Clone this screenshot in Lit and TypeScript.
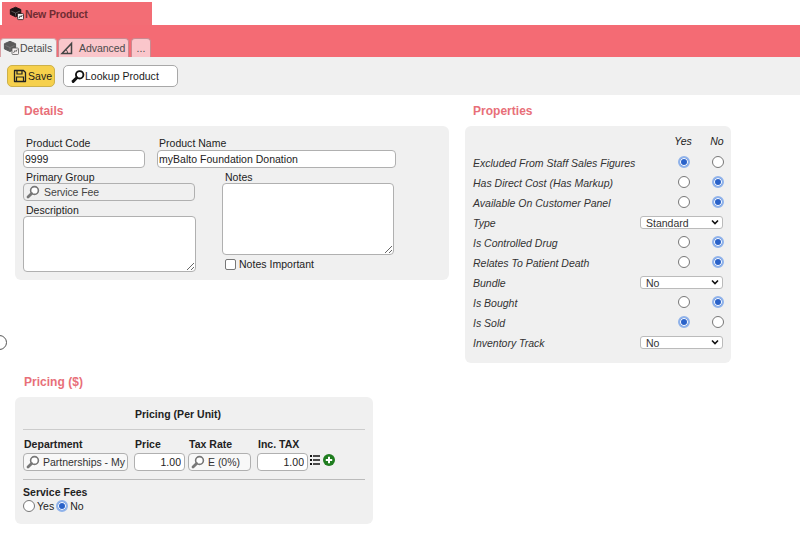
import { LitElement, html, css, svg } from "lit";
import { customElement } from "lit/decorators.js";

const lens = html`<svg class="lens" viewBox="0 0 14 14"><circle cx="8.5" cy="5.5" r="3.9" fill="#fff" stroke="#777" stroke-width="1.6"/><path d="M5.6 8.4 2 12" stroke="#777" stroke-width="2.8" stroke-linecap="round"/></svg>`;

const boxes = (c: string) => svg`<path d="M7 .8 12.6 3.2V8.4L7 11 1.4 8.4V3.2Z" fill="${c}" stroke="${c}" stroke-linejoin="round"/><path d="M2.5 5 7 7 11.5 5" stroke="#888" stroke-width=".6" fill="none"/><path d="M7 7v3" stroke="#888" stroke-width=".6"/><rect x="9" y="7.5" width="6.5" height="6.5" rx="1" fill="#f4f0f0" stroke="${c}" stroke-width=".8"/><path d="M10.5 12.5 12 10l1 1 1.2-2" stroke="${c}" stroke-width=".9" fill="none"/>`;

type Row = { label: string; yes?: boolean; select?: string };
const rows: Row[] = [
  { label: "Excluded From Staff Sales Figures", yes: true },
  { label: "Has Direct Cost (Has Markup)", yes: false },
  { label: "Available On Customer Panel", yes: false },
  { label: "Type", select: "Standard" },
  { label: "Is Controlled Drug", yes: false },
  { label: "Relates To Patient Death", yes: false },
  { label: "Bundle", select: "No" },
  { label: "Is Bought", yes: false },
  { label: "Is Sold", yes: true },
  { label: "Inventory Track", select: "No" },
];

@customElement("app-root")
export class AppRoot extends LitElement {
  static styles = css`
    :host { display: block; position: relative; width: 800px; height: 544px; overflow: hidden; background: #fff;
      font-family: "Liberation Sans", Arial, sans-serif; font-size: 10.5px; color: #222; letter-spacing: 0.02px; }
    * { box-sizing: border-box; }
    .title-row { height: 25px; padding: 2px 0 0 2px; display: flex; }
    .title { width: 150px; height: 23px; background: #f36d75; display: flex; align-items: center; gap: 1px; padding: 0 0 0 7px;
      font-weight: bold; font-size: 10.5px; letter-spacing: -0.15px; color: #6f2c32; }
    .title svg { width: 15px; height: 15px; }
    .tabbar { height: 32px; background: #f46b74; display: flex; align-items: flex-end; gap: 1px; }
    .tab { height: 19px; background: #fac6cb; border: 1px solid #c98a90; border-bottom: none; border-radius: 4px 4px 0 0;
      display: flex; align-items: center; gap: 3px; color: #4b4b4b; font-size: 10.5px; }
    .tab svg { width: 16px; height: 16px; }
    .tab.a { width: 57px; background: #f0f0f0; border-color: #d9a0a5; padding-left: 2px; gap: 1px; }
    .tab.b { width: 71px; padding-left: 1px; gap: 3px; letter-spacing: -0.05px; }
    .tab.c { width: 20px; margin-left: 1px; justify-content: center; }
    .toolbar { height: 38px; background: #f0f0f0; display: flex; align-items: flex-start; gap: 8px; padding: 8px 0 0 7px; }
    .btn { height: 22px; border-radius: 5px; display: flex; align-items: center; font-size: 10.5px; color: #1a1a1a; }
    .save { width: 48px; background: #f6d04c; border: 1px solid #cdb14a; padding-left: 5px; gap: 1px; }
    .save svg { width: 14px; height: 14px; }
    .lookup { width: 115px; background: #fff; border: 1px solid #a8a8a8; padding-left: 7px; }
    .lookup svg { width: 14px; height: 15px; }
    .top { display: flex; padding-left: 15px; gap: 16px; }
    .col-l { width: 434px; }
    .col-r { width: 266px; }
    h2 { margin: 0; height: 31px; padding: 9px 0 0 9px; font-size: 12px; line-height: 14px; font-weight: bold; color: #e86f79; }
    .col-r h2 { padding-left: 8px; }
    .panel { background: #f0f0f0; border-radius: 6px; }
    .details { height: 154px; padding: 11px 0 0 8px; }
    label, .lbl { display: block; height: 13px; line-height: 13px; padding-left: 3px; white-space: nowrap; }
    input[type=text], textarea, .field { display: block; background: #fff; border: 1px solid #b0b0b0; border-radius: 4px; font: inherit; color: #222;
      letter-spacing: inherit; margin: 0; outline: none; }
    input[type=text] { height: 18px; padding: 0 1px; }
    textarea { resize: both; padding: 2px; }
    .r1 { display: flex; gap: 12px; }
    .r2 { display: flex; margin-top: 3px; gap: 26px; }
    .r2 label { height: 12px; }
    .f-code { width: 122px; }
    .f-name { width: 239px; }
    .f-name label { padding-left: 2px; }
    .field { display: flex; align-items: center; height: 18px; white-space: nowrap; overflow: hidden; color: #444; }
    .lens { width: 14px; height: 14px; flex: none; }
    .group { width: 172px; background: #f0f0f0; padding-left: 2px; gap: 4px; margin-top: 0; letter-spacing: -0.1px; }
    .c1 { width: 173px; }
    .c1 .lbl2 { margin-top: 3px; }
    .desc { width: 173px; height: 56px; margin-top: 0; }
    .notes { width: 172px; height: 72px; }
    .chk { display: flex; align-items: center; gap: 3px; margin: 3px 0 0 3px; height: 12px; }
    .box { width: 11px; height: 11px; background: #fff; border: 1px solid #777; border-radius: 2px; flex: none; }
    .props { height: 237px; width: 266px; display: grid; grid-template-columns: 1fr 26px 26px; column-gap: 8px; grid-auto-rows: 20px; padding: 6px 0 0 8px; font-style: italic; letter-spacing: 0; }
    .props > .hd { text-align: center; line-height: 20px; margin: -1px 2px 0 0; }
    .props .row-l { line-height: 20px; white-space: nowrap; color: #333; margin-top: 1px; }
    .cell { display: flex; justify-content: center; align-items: center; }
    .radio { width: 12px; height: 12px; border-radius: 50%; background: #fff; border: 1px solid #777; flex: none; }
    .radio.on { border: 2px solid #8fb2ea; background: #2a62c9; box-shadow: inset 0 0 0 1px #fff; }
    .selwrap { grid-column: 2 / 4; display: flex; justify-content: flex-end; align-items: center; padding-right: 8px; }
    select { appearance: none; -webkit-appearance: none; flex: none; font: inherit; font-style: normal; letter-spacing: inherit; color: #333; width: 83px; height: 13px; padding: 0 0 0 5px; margin: 0; line-height: 12px;
      border: 1px solid #bbb; border-radius: 3px; background: #fff url("data:image/svg+xml,%3Csvg xmlns='http://www.w3.org/2000/svg' width='8' height='6'%3E%3Cpath d='M1 1.5 4 4.5 7 1.5' fill='none' stroke='%23111' stroke-width='1.6'/%3E%3C/svg%3E") no-repeat right 3px center; outline: none; }
    .pricing-sec { padding-left: 15px; }
    .pricing-sec h2 { height: 34px; padding-top: 12px; }
    .pricing { width: 358px; height: 127px; padding: 0 8px; }
    .ptitle { height: 33px; padding: 11px 32px 0 0; line-height: 13px; text-align: center; font-weight: bold; border-bottom: 1px solid #ccc; }
    .pgrid { display: grid; grid-template-columns: 111px 54px 69px 53px auto; align-content: start; padding-top: 8px; height: 50px; border-bottom: 1px solid #bbb; }
    .phd { font-weight: bold; height: 15px; line-height: 13px; padding-left: 1px; }
    .pc { display: flex; align-items: flex-start; }
    .pgrid .field { height: 18px; background: #f8f8f8; padding-left: 2px; gap: 3px; color: #333; letter-spacing: -0.02px; }
    .pgrid input[type=text] { text-align: right; height: 18px; width: 51px; padding-right: 3px; }
    .icons { display: flex; align-items: center; gap: 3px; height: 14px; }
    .icons svg { display: block; }
    .sf { font-weight: bold; margin-top: 6px; height: 13px; line-height: 13px; }
    .yn { display: flex; align-items: center; height: 13px; }
    .yn .radio { margin-right: 2px; }
    .yn span:not(.radio) { margin-right: 2px; }
    .edge { position: absolute; left: -8px; top: 335px; width: 15px; height: 15px; border-radius: 50%; background: #fff; border: 1px solid #555; }
  `;

  render() {
    return html`
      <div class="title-row"><div class="title"><svg viewBox="0 0 16 15">${boxes("#1a1113")}</svg>New Product</div></div>
      <div class="tabbar">
        <div class="tab a"><svg viewBox="0 0 16 15">${boxes("#5a5a5a")}</svg>Details</div>
        <div class="tab b"><svg viewBox="0 0 16 16"><path d="M2 13.5 11.5 3.5V13.5Z" fill="none" stroke="#444" stroke-width="1.5"/><path d="M7.5 13.5a5 5 0 0 0-1.5-4" fill="none" stroke="#444"/></svg>Advanced</div>
        <div class="tab c">...</div>
      </div>
      <div class="toolbar">
        <div class="btn save"><svg viewBox="0 0 14 14"><path d="M1.5 1.5h9l2 2v9h-11Z" fill="none" stroke="#222" stroke-width="1.3" stroke-linejoin="round"/><path d="M4 2v3h5V2M3.5 12.5V8h7v4.5" fill="none" stroke="#222" stroke-width="1.2"/></svg>Save</div>
        <div class="btn lookup"><svg viewBox="0 0 15 15"><circle cx="9.3" cy="5.7" r="4" fill="#fff" stroke="#111" stroke-width="2"/><path d="M6.2 8.8 2.3 12.7" stroke="#111" stroke-width="3.2" stroke-linecap="round"/></svg>Lookup Product</div>
      </div>
      <div class="top">
        <div class="col-l">
          <h2>Details</h2>
          <div class="panel details">
            <div class="r1">
              <div class="f-code"><label>Product Code</label><input type="text" class="f-code" .value=${"9999"} /></div>
              <div class="f-name"><label>Product Name</label><input type="text" class="f-name" .value=${"myBalto Foundation Donation"} /></div>
            </div>
            <div class="r2">
              <div class="c1">
                <label>Primary Group</label>
                <div class="field group">${lens}<span>Service Fee</span></div>
                <label class="lbl2">Description</label>
                <textarea class="desc"></textarea>
              </div>
              <div>
                <label>Notes</label>
                <textarea class="notes"></textarea>
                <div class="chk"><span class="box"></span>Notes Important</div>
              </div>
            </div>
          </div>
        </div>
        <div class="col-r">
          <h2>Properties</h2>
          <div class="panel props">
            <div></div><div class="hd">Yes</div><div class="hd">No</div>
            ${rows.map(
              (r) => html`<div class="row-l">${r.label}</div>
                ${r.select
                  ? html`<div class="selwrap"><select><option>${r.select}</option></select></div>`
                  : html`<div class="cell"><span class="radio ${r.yes ? "on" : ""}"></span></div>
                      <div class="cell"><span class="radio ${r.yes ? "" : "on"}"></span></div>`}`
            )}
          </div>
        </div>
      </div>
      <div class="pricing-sec">
        <h2>Pricing ($)</h2>
        <div class="panel pricing">
          <div class="ptitle">Pricing (Per Unit)</div>
          <div class="pgrid">
            <div class="phd">Department</div><div class="phd">Price</div><div class="phd">Tax Rate</div><div class="phd">Inc. TAX</div><div></div>
            <div class="pc"><div class="field" style="width:105px">${lens}<span>Partnerships - My</span></div></div>
            <div class="pc"><input type="text" .value=${"1.00"} /></div>
            <div class="pc"><div class="field" style="width:63px">${lens}<span>E (0%)</span></div></div>
            <div class="pc"><input type="text" .value=${"1.00"} /></div>
            <div class="pc"><div class="icons">
              <svg width="10" height="10" viewBox="0 0 10 10"><path d="M0 0h2v2H0zM3 .3h7v1.5H3zM0 4h2v2H0zM3 4.3h7v1.5H3zM0 8h2v2H0zM3 8.3h7v1.5H3z" fill="#111"/></svg>
              <svg width="12" height="12" viewBox="0 0 12 12"><circle cx="6" cy="6" r="6" fill="#1f7d1f"/><path d="M6 2.8v6.4M2.8 6h6.4" stroke="#fff" stroke-width="2"/></svg>
            </div></div>
          </div>
          <div class="sf">Service Fees</div>
          <div class="yn"><span class="radio"></span><span>Yes</span><span class="radio on"></span><span>No</span></div>
        </div>
      </div>
      <div class="edge"></div>
    `;
  }
}
